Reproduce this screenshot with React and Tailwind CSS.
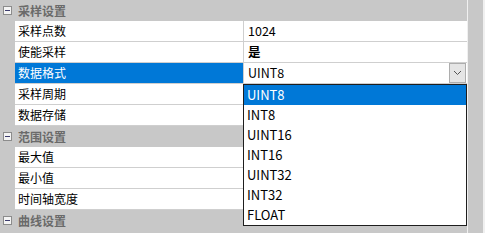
import React from "react";

const font = { fontFamily: '"Noto Sans CJK SC", "Noto Sans", sans-serif' };

function Cat({ label }) {
  return (
    <div className="flex h-[21px] items-center bg-[#c8c8c8]">
      <div className="flex w-[15px] justify-center">
        <div className="flex h-[9px] w-[9px] items-center justify-center border border-[#8c8c8c] bg-[#f4f4f4]">
          <div className="h-px w-[5px] bg-[#3c3c6e]" />
        </div>
      </div>
      <div className="pl-[3px] text-[12px] font-bold text-[#6a6a6a]">{label}</div>
    </div>
  );
}

function Row({ label, value, selected, combo, boldValue }) {
  return (
    <div className="flex h-[21px]">
      <div className="w-[15px] bg-[#c8c8c8]" />
      <div
        className={
          "flex w-[228px] items-center border-b border-[#cfcfcf] pl-[3px] text-[12px] " +
          (selected ? "bg-[#0078d7] text-white" : "bg-white text-black")
        }
      >
        {label}
      </div>
      <div className="flex w-[224px] items-center border-b border-l border-[#cfcfcf] bg-white text-[12.5px] text-black">
        {combo ? (
          <div className="flex h-full w-full items-center pl-[4px]">
            <span className="flex-1">{value}</span>
            <div className="mr-[1px] flex h-[20px] w-[17px] items-center justify-center border border-[#adadad] bg-[#e5e5e5]">
              <svg width="9" height="6" viewBox="0 0 9 6">
                <path d="M1 1 L4.5 4.5 L8 1" fill="none" stroke="#555" strokeWidth="1" />
              </svg>
            </div>
          </div>
        ) : (
          <span className={"pl-[4px] " + (boldValue ? "font-bold" : "")}>{value}</span>
        )}
      </div>
    </div>
  );
}

const items = ["UINT8", "INT8", "UINT16", "INT16", "UINT32", "INT32", "FLOAT"];

export default function App() {
  return (
    <div className="relative flex h-[233px] w-[485px] overflow-hidden bg-[#c8c8c8]" style={font}>
      <div className="flex w-[467px] flex-col">
        <Cat label="采样设置" />
        <Row label="采样点数" value="1024" />
        <Row label="使能采样" value="是" boldValue />
        <Row label="数据格式" value="UINT8" selected combo />
        <Row label="采样周期" value="" />
        <Row label="数据存储" value="" />
        <Cat label="范围设置" />
        <Row label="最大值" value="" />
        <Row label="最小值" value="" />
        <Row label="时间轴宽度" value="" />
        <Cat label="曲线设置" />
      </div>
      <div className="w-px bg-[#f0f0f0]" />
      <div className="w-[15px] bg-[#c8c8c8]" />
      <div className="w-[2px] bg-[#f0f0f0]" />

      <div className="absolute left-[243px] top-[84px] flex w-[224px] flex-col border border-[#1e1e1e] bg-white">
        {items.map((it, i) => (
          <div
            key={it}
            className={
              "flex h-[20px] items-center pl-[3px] text-[13px] " +
              (i === 0 ? "bg-[#0078d7] text-white" : "text-black")
            }
          >
            {it}
          </div>
        ))}
      </div>
    </div>
  );
}
